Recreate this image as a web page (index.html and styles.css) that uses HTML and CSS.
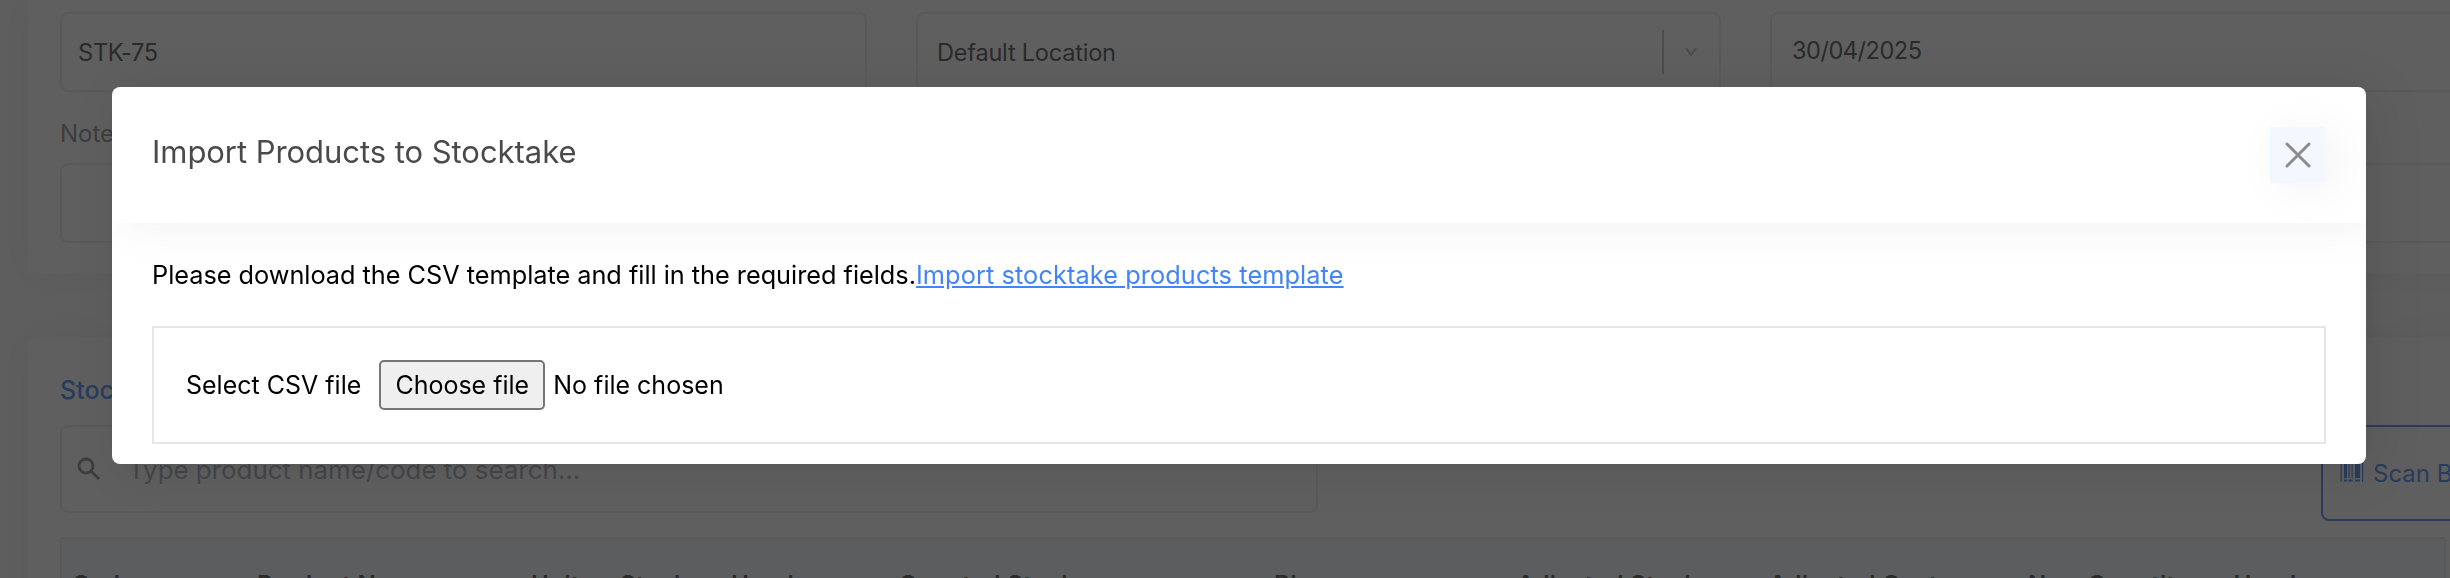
FILE: index.html
```html
<!DOCTYPE html>
<html lang="en">
  <head>
    <meta charset="UTF-8" />
    <meta name="viewport" content="width=device-width, initial-scale=1.0" />
    <title>Stocktake</title>
    <link rel="stylesheet" href="styles.css">
  </head>
  <body>
    <main class="page">
      <section class="card details">
        <div class="field-row">
          <div class="field">STK-75</div>
          <div class="field select">
            <span>Default Location</span>
            <span class="select-arrow">
              <svg width="12" height="12" viewBox="0 0 12 12"><path d="M1 2l5 7 5-7" /></svg>
            </span>
          </div>
          <div class="field date">30/04/2025</div>
        </div>
        <div class="note-label">Note</div>
        <div class="field note"></div>
      </section>

      <section class="card products">
        <h2>Stocktake Products</h2>
        <div class="toolbar">
          <div class="search">
            <svg width="24" height="24" viewBox="0 0 24 24">
              <circle cx="9" cy="9" r="7" />
              <path d="M14 14l8 8" />
            </svg>
            <span>Type product name/code to search...</span>
          </div>
          <div class="scan-button">
            <svg width="24" height="24" viewBox="0 0 24 24">
              <path d="M.5 0h1.200v24H.5zM4 0h3v20H4zM8.500 0h1.200v20H8.500zM11.500 0h1.200v20h-1.200zM15 0h5v20h-5zM22 0h1.200v24H22zM4 21.500h3v2H4zM8.500 21.500h4.200v2H8.500zM15 21.500h5v2h-5z" />
            </svg>
            <span>Scan Barcode</span>
          </div>
        </div>
        <div class="table-head">
          <span>Code</span>
          <span>Product Name</span>
          <span>Unit</span>
          <span>Stock on Hand</span>
          <span>Counted Stock</span>
          <span>Bin</span>
          <span>Adjusted Stock</span>
          <span>Adjusted Cost</span>
          <span>New Quantity on Hand</span>
        </div>
      </section>
    </main>

    <div class="overlay">
      <div class="modal">
        <div class="modal-header">
          <h1>Import Products to Stocktake</h1>
          <button class="close" aria-label="Close">
            <svg width="26" height="26" viewBox="0 0 26 26"><path d="M2 2l22 22M24 2L2 24" /></svg>
          </button>
        </div>
        <div class="modal-body">
          <p>Please download the CSV template and fill in the required fields.<a href="#">Import stocktake products template</a></p>
          <div class="upload">
            <span>Select CSV file</span>
            <button class="choose">Choose file</button>
            <span>No file chosen</span>
          </div>
        </div>
      </div>
    </div>
  </body>
</html>
```

FILE: styles.css
```css
* {
  box-sizing: border-box;
}

body {
  margin: 0;
  height: 578px;
  overflow: hidden;
  font-family: Inter, sans-serif;
  font-size: 24px;
  color: #4a4a4a;
  background-color: #fcfcfc;
}

h1,
h2,
p {
  margin: 0;
  font-weight: 400;
}

.page {
  width: 2573px;
  height: 578px;
  padding-left: 28px;
  overflow: hidden;
}

.card {
  background-color: #fff;
  box-shadow: 0 0 40px rgba(0, 0, 0, 0.07);
}

.details {
  height: 274px;
  padding: 12px 0 0 32px;
}

.field-row {
  display: grid;
  grid-template-columns: 807px 805px 807px;
  gap: 49px;
}

.field {
  display: flex;
  align-items: center;
  height: 80px;
  padding: 0 16px;
  border: 2px solid #ebebeb;
  border-radius: 8px;
  font-size: 23.600px;
  letter-spacing: -0.25px;
}

.select {
  justify-content: space-between;
  padding: 0 22px 0 19px;
}

.select-arrow {
  display: flex;
  align-items: center;
  height: 44px;
  padding-left: 21px;
  border-left: 2px solid #bbb;
}

.select-arrow path {
  fill: none;
  stroke: #bbb;
  stroke-width: 2;
}

.date {
  padding: 0 20px 4px;
  letter-spacing: -0.5px;
}

.note-label {
  height: 71px;
  padding-top: 27px;
  line-height: 30px;
  color: #8a8a8a;
}

.note {
  margin-right: 32px;
}

.products {
  height: 300px;
  margin-top: 64px;
  padding: 33px 32px 0;
}

.products h2 {
  height: 54px;
  font-size: 25px;
  font-weight: 500;
  line-height: 38px;
  color: #4285f8;
}

.toolbar {
  display: flex;
  justify-content: space-between;
  height: 112px;
}

.search {
  display: flex;
  align-items: center;
  gap: 27px;
  width: 1258px;
  height: 88px;
  padding-left: 15px;
  border: 2px solid #ebebeb;
  border-radius: 8px;
  font-size: 25.9px;
  color: #a4a4b2;
}

.search svg {
  fill: none;
  stroke: #888;
  stroke-width: 2.8;
}

.scan-button {
  display: flex;
  align-items: center;
  gap: 9px;
  flex: none;
  width: 220px;
  height: 96px;
  padding-left: 17px;
  border: 2px solid #4285f8;
  border-radius: 8px;
  white-space: nowrap;
  color: #4285f8;
}

.scan-button svg {
  flex: none;
  margin-bottom: 6px;
  fill: #4285f8;
}

.table-head {
  display: grid;
  grid-template-columns: 185px 274px 89px 279px 375px 243px 252px 259px 1fr;
  width: 2386px;
  height: 80px;
  padding: 31px 0 0 10px;
  border: 2px solid #ebebeb;
  background-color: #f4f7fc;
  font-weight: 600;
  letter-spacing: 0.4px;
  white-space: nowrap;
}

/* Modal */
.overlay {
  position: fixed;
  inset: 0;
  padding: 87px 84px 0 112px;
  background-color: rgba(31, 31, 31, 0.714);
}

.modal {
  height: 377px;
  border-radius: 8px;
  overflow: hidden;
  background-color: #fff;
  box-shadow: 10px 5px 50px rgba(0, 0, 0, 0.1);
}

.modal-header {
  display: flex;
  justify-content: space-between;
  height: 136px;
  padding: 40px 40px 0;
  box-shadow: 10px 5px 50px rgba(0, 0, 0, 0.055);
}

.modal-header h1 {
  font-size: 31px;
  line-height: 50px;
  letter-spacing: -0.05px;
}

.close {
  display: flex;
  align-items: center;
  justify-content: center;
  width: 56px;
  height: 56px;
  padding: 0;
  border: none;
  background-color: #f3f8ff;
  box-shadow: 10px 5px 50px rgba(0, 0, 0, 0.06);
}

.close path {
  fill: none;
  stroke: #8b8b8b;
  stroke-width: 3;
  stroke-linecap: round;
}

.modal-body {
  padding: 34px 40px 0;
  color: #000;
}

.modal-body p {
  height: 69px;
  font-size: 25.3px;
  line-height: 36px;
  letter-spacing: -0.02px;
}

.modal-body a {
  letter-spacing: 0.1px;
  color: #4285f8;
}

.upload {
  display: flex;
  align-items: center;
  height: 118px;
  padding-left: 32px;
  border: 2px solid #e6e6e6;
  font-size: 25px;
}

.choose {
  width: 166px;
  height: 50px;
  margin: 0 8px 0 18px;
  padding: 0;
  border: 2px solid #767676;
  border-radius: 5px;
  background-color: #efefef;
  font: inherit;
}
```
